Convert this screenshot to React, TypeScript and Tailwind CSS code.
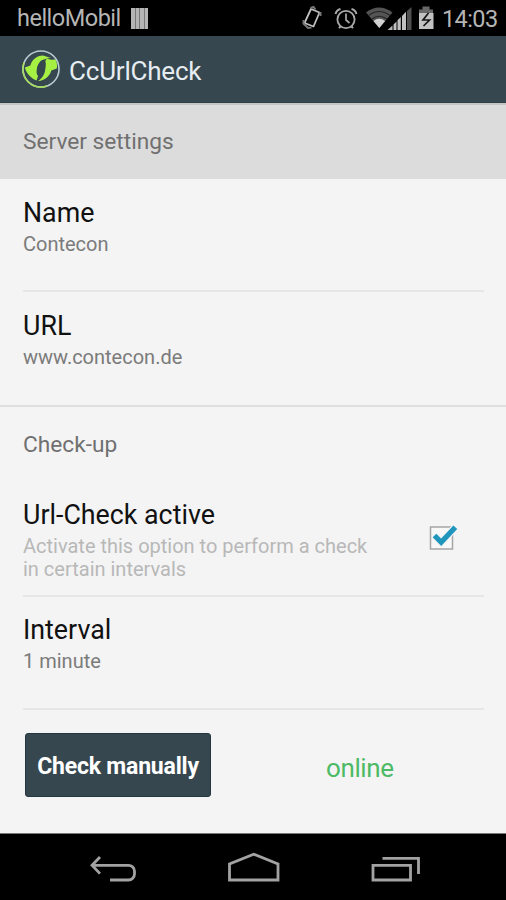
import type { ReactNode } from 'react';

type RowProps = {
    title: string;
    summary: string;
    className: string;
    muted?: boolean;
    children?: ReactNode;
};

const StatusIcons = () => (
    <svg width="136" height="28" viewBox="300 4 136 28" fill="none">
        {/* rotation lock */}
        <path d="M311 9l8.500 3.500-6 14-9-3.500z" stroke="#c0c0c0" strokeWidth="1.800" strokeLinejoin="round" />
        <path d="M310.500 8l3-1 2 2.500M303.500 20v3.500l4.500 4.500 3.500-.5M320.500 12v4" stroke="#777" strokeWidth="2" />
        {/* alarm clock */}
        <circle cx="346" cy="19.500" r="8.600" stroke="#a8a8a8" strokeWidth="1.800" />
        <path d="M346 13.500v6.500l3.500 3" stroke="#a8a8a8" strokeWidth="1.700" />
        <path d="M335.500 14q1-4 5-5M351.500 9q4 1 5 5M340.500 26.500l-1.500 1.700M351.500 26.500l1.500 1.700" stroke="#a8a8a8" strokeWidth="2" />
        {/* wifi */}
        <path d="M366 12.500q13-10 26.500 0L379.300 28z" fill="#545454" />
        <path d="M368.500 15.500q10.800-8 21.500 0M371.800 19q7.500-5.500 15 0" stroke="#262626" strokeWidth="1.100" />
        <path d="M373.500 21q5.800-4.500 11.600 0L379.300 28z" fill="#d2d2d2" />
        {/* cell signal */}
        <path d="M387.500 30l5-4.500V30z" fill="#b5b5b5" />
        <path d="M393.500 30v-5.500l3-3V30zM397.500 30v-9.800l3.300-3.200V30zM402 30V16l4-4.200V30z" fill="#c0c0c0" />
        <path d="M407 30V11l4.500-4v23z" fill="#505050" />
        {/* charging battery */}
        <path d="M419 9.500h3.500V6.500h7v3h3.500v4h-14z" fill="#686868" />
        <path d="M419 13h14.500v16H419z" fill="#c2c2c2" />
        <path d="M428.500 13l-5.500 7h6.500l-6 6" stroke="#161616" strokeWidth="1.700" />
    </svg>
);

const AppLogo = () => (
    <svg width="40" height="40" viewBox="0 0 40 40" fill="none">
        <circle cx="20" cy="20" r="18" stroke="#b9ccd4" strokeWidth="1.600" />
        <path d="M26 37A18 18 0 0 1 3 13.500" stroke="#a6dc5c" strokeWidth="1.600" />
        {/* two arrows chasing each other */}
        <path d="M3.800 18.500l5.500-2C11 10.500 15.500 6.600 22 6.400l8 2.600C22 9 16 14.500 16 20.500l2.800 1.500-3.300 9.500C9.500 29 5.500 24.500 3.800 18.500z" fill="#a5f043" />
        <path d="M35.800 19.500l-5.500 2C28.600 27.500 24 31.600 17 32c5-3.500 7.500-8 7.300-13.500l-3-1.500 4.500-7.500 4.200 1.300 4.500-.3c1.500 3 1.900 6 1.300 9z" fill="#a5f043" />
        <ellipse cx="20.200" cy="19" rx="4" ry="8.600" transform="rotate(18 20.200 19)" fill="#34484e" />
    </svg>
);

const Checkbox = () => (
    <svg width="32" height="32" viewBox="0 0 32 32" fill="none">
        <path d="M24.500 4h-22v22h22V4" fill="#f8f8f8" stroke="#a5a5a5" strokeWidth="1.500" />
        <path d="M6.500 13L13 19.200 27.500 4.200" stroke="#f4f4f4" strokeWidth="7.500" />
        <path d="M6.500 12.500L13.200 19.300 27.300 4.200" stroke="#2196bd" strokeWidth="5.200" />
    </svg>
);

const SectionTitle = ({ label }: { label: string }) => (
    <h2 className="pl-[23px] text-[22.700px] leading-8 text-[#707070]">{label}</h2>
);

const Row = ({ title, summary, className, muted, children }: RowProps) => (
    <div className={`mr-[22px] ml-[23px] flex items-start justify-between border-[#e6e6e6] ${className}`}>
        <div>
            <h3 className="h-8 text-[26.800px] leading-[33px] text-[#111]">{title}</h3>
            <p className={`mt-1 w-[360px] text-[20px] leading-[23px] ${muted ? 'text-[#b8b8b8]' : 'text-[#7b7b7b]'}`}>
                {summary}
            </p>
        </div>
        {children}
    </div>
);

const App = () => {
    return (
        <div className="flex h-[900px] w-[506px] flex-col overflow-hidden bg-[#f4f4f4] font-['Roboto',sans-serif]">
            <div className="flex h-9 shrink-0 items-center bg-black pl-[17px] text-[#b5b5b5]">
                <span className="w-[114px] text-[23.500px] leading-9 tracking-[-0.5px]">helloMobil</span>
                <div className="flex h-[21px] gap-px bg-[#777]">
                    <span className="w-[3.500px] bg-[#b5b5b5]" />
                    <span className="w-[3.500px] bg-[#b5b5b5]" />
                    <span className="w-[3.500px] bg-[#b5b5b5]" />
                    <span className="w-[3.500px] bg-[#b5b5b5]" />
                </div>
                <div className="ml-auto flex items-center gap-[6px] pr-[7px]">
                    <StatusIcons />
                    <span className="w-[57px] pt-px text-[23.500px] leading-9 tracking-[-0.6px]">14:03</span>
                </div>
            </div>

            <header className="flex h-[67px] shrink-0 items-center gap-2 border-b border-[#2c4248] bg-[#37474f] pl-[21px]">
                <AppLogo />
                <h1 className="pt-[3px] text-[26px] leading-8 tracking-[-0.2px] text-[#e6edf2]">CcUrlCheck</h1>
            </header>

            <main className="flex-1">
                <div className="h-[76px] border-t-2 border-[#c4c4c4] bg-[#dcdcdc] pt-[21px]">
                    <SectionTitle label="Server settings" />
                </div>
                <Row title="Name" summary="Contecon" className="h-[113px] border-b-2 pt-[18px]" />
                <Row title="URL" summary="www.contecon.de" className="h-[113px] pt-[18px]" />
                <div className="h-[94px] border-t-2 border-[#dedede] pt-[22px]">
                    <SectionTitle label="Check-up" />
                </div>
                <Row
                    title="Url-Check active"
                    summary="Activate this option to perform a check in certain intervals"
                    className="h-[98px] border-b-2"
                    muted
                >
                    <div className="mt-[24px] mr-[24px] shrink-0">
                        <Checkbox />
                    </div>
                </Row>
                <Row title="Interval" summary="1 minute" className="h-[113px] border-b-2 pt-[17px]" />
                <div className="flex pt-[23px] pl-[25px]">
                    <button className="h-[64px] w-[186px] rounded-[3px] border border-[#24363f] bg-[#37474f] pt-1 text-[23px] font-bold tracking-[-0.200px] text-white">
                        Check manually
                    </button>
                    <span className="ml-[115px] pt-[19px] text-[26px] leading-8 tracking-[-0.400px] text-[#4dba66]">
                        online
                    </span>
                </div>
            </main>

            <nav className="h-[67px] shrink-0 border-t border-[#777] bg-black">
                <svg width="506" height="66" viewBox="0 834 506 66" fill="none" stroke="#a2a2a2" strokeWidth="2.800">
                    <path d="M100 857l-8 8.300 8 8.300M92 865.300h36.500a6 6 0 0 1 6 6v2.700a6 6 0 0 1-6 6H110" />
                    <path d="M229.500 880v-16l24.200-9.800 24.300 9.800v16z" />
                    <path d="M373 865.300h37.500V880H373zM382.500 858.300h36V874" />
                </svg>
            </nav>
        </div>
    );
};

export default App;
